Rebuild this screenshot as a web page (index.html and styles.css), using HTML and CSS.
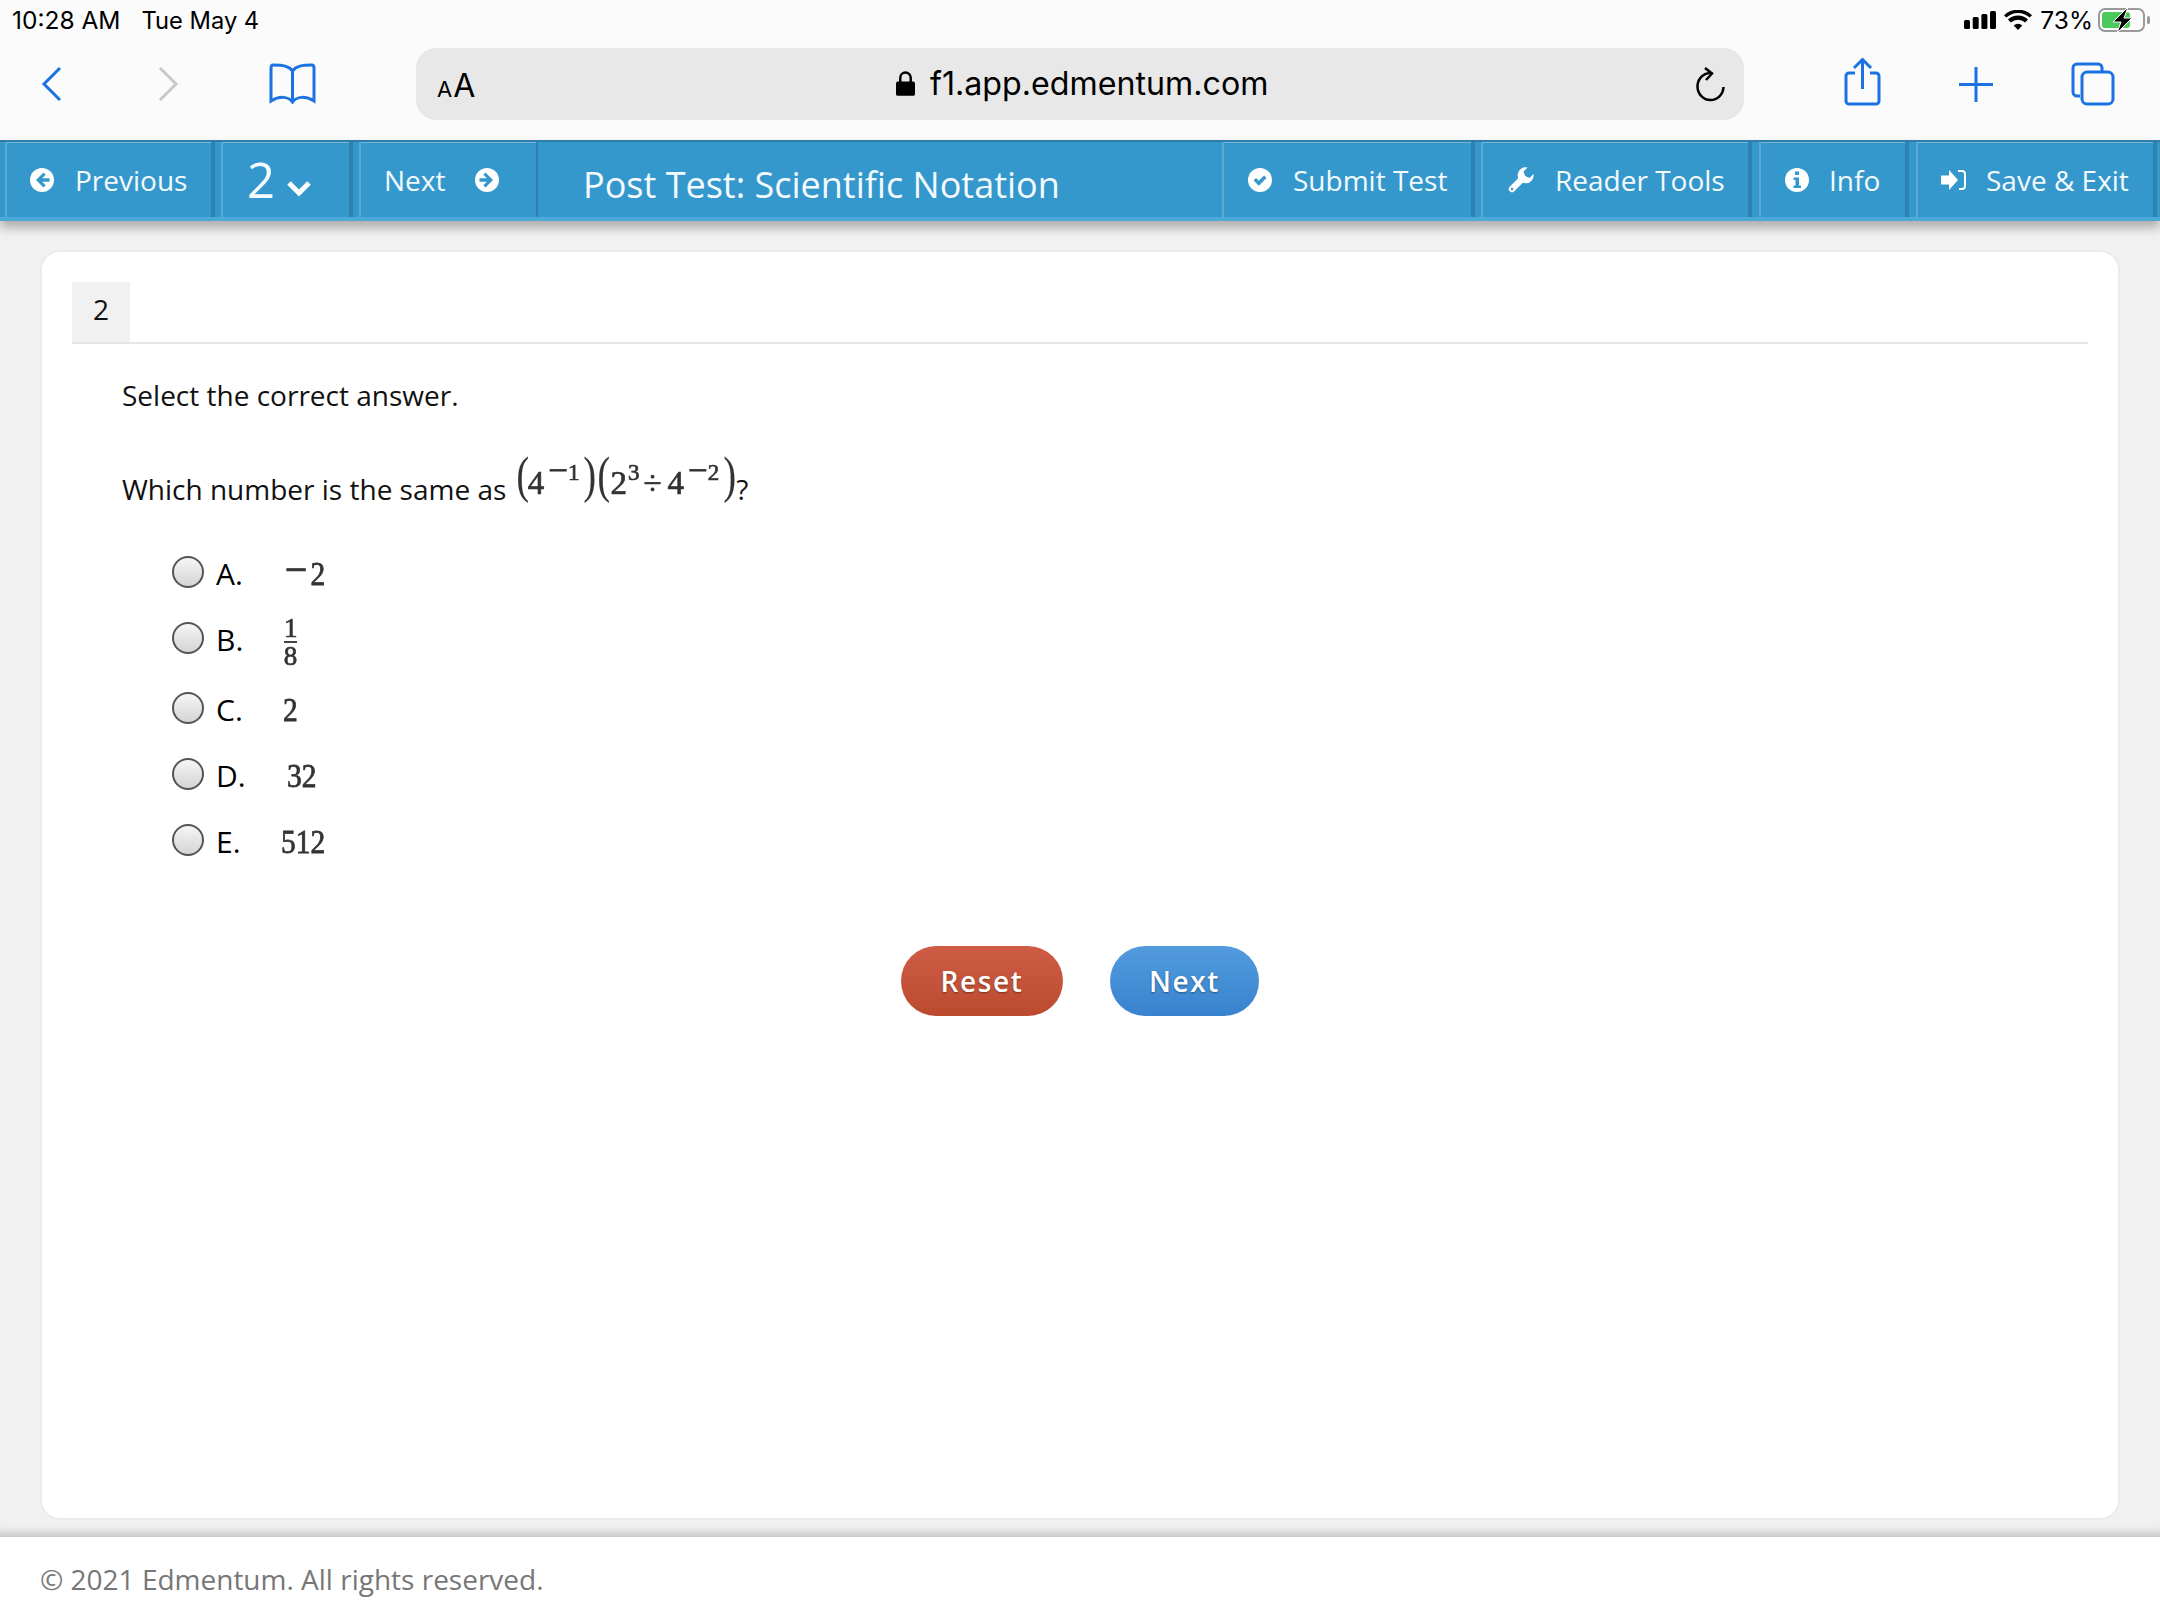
FILE: index.html
```html
<!DOCTYPE html>
<html lang="en">
<head>
<meta charset="utf-8">
<title>Post Test: Scientific Notation</title>
<link rel="stylesheet" href="styles.css">
</head>
<body>
<header class="ios">
  <div class="status">
    <span class="time">10:28 AM</span><span class="date">Tue May 4</span>
    <span class="status-right">
      <svg class="signal" viewBox="0 0 32 18"><rect x="0" y="9" width="6" height="9" rx="1.500"/><rect x="8.700" y="6" width="6" height="12" rx="1.500"/><rect x="17.400" y="3" width="6" height="15" rx="1.500"/><rect x="26" y="0" width="6" height="18" rx="1.500"/></svg>
      <svg class="wifi" viewBox="0 0 28 20"><path d="M14 20l-4.300-4.600a6.300 6.300 0 0 1 8.600 0zM6.900 12.500L4 9.400a14.600 14.600 0 0 1 20 0l-2.900 3.100a10.300 10.300 0 0 0-14.200 0zM2.300 7.600L0 5.200a20.400 20.400 0 0 1 28 0l-2.300 2.400a17 17 0 0 0-23.400 0z"/></svg>
      <span class="pct">73%</span>
      <svg class="battery" viewBox="0 0 52 26"><rect x="1" y="2" width="45" height="22" rx="6" fill="none" stroke="#9a9a9a" stroke-width="2"/><rect x="4" y="5" width="28" height="16" rx="3" fill="#4cc95c"/><rect x="49" y="9" width="3" height="8" rx="1.500" fill="#9a9a9a"/><path d="M30 0L15 15h8l-4 11 15-15h-8z" fill="#000" stroke="#fff" stroke-width="1"/></svg>
    </span>
  </div>
  <div class="toolbar">
    <svg class="tb back" viewBox="0 0 21 36"><path d="M19 2L3 18l16 16"/></svg>
    <svg class="tb fwd" viewBox="0 0 21 36"><path d="M2 2l16 16L2 34"/></svg>
    <svg class="tb book" viewBox="0 0 47 41"><path d="M23.500 8C20 3 14 2 4 2Q2 2 2 5v33c8-5 17-5 21.500 1C28 33 37 33 45 38V5q0-3-2-3C33 2 27 3 23.500 8zM23.500 8v31"/></svg>
    <div class="address">
      <span class="aa"><small>A</small>A</span>
      <span class="url"><svg class="lock" viewBox="0 0 20 26"><path d="M2 11h16a2 2 0 0 1 2 2v11a2 2 0 0 1-2 2H2a2 2 0 0 1-2-2V13a2 2 0 0 1 2-2z"/><path d="M4.500 12V7a5.500 5.500 0 0 1 11 0v5" fill="none" stroke="#000" stroke-width="2.600"/></svg>f1.app.edmentum.com</span>
      <svg class="reload" viewBox="0 0 30 36"><path d="M15 6A13 13.500 0 1 0 28.500 20"/><path d="M10 1l7 5.500-6 6.500"/></svg>
    </div>
    <svg class="tb share" viewBox="0 0 37 48"><path d="M11 15H5a3 3 0 0 0-3 3v25a3 3 0 0 0 3 3h27a3 3 0 0 0 3-3V18a3 3 0 0 0-3-3h-6M18.500 31V2M10 10l8.500-8.500L27 10"/></svg>
    <svg class="tb plus" viewBox="0 0 34 35"><path d="M17 0v35M0 17.500h34"/></svg>
    <svg class="tb tabs" viewBox="0 0 44 44"><path d="M9 34H6a4 4 0 0 1-4-4V6a4 4 0 0 1 4-4h21a4 4 0 0 1 4 4v4"/><rect x="11" y="10" width="31" height="32" rx="5"/></svg>
  </div>
</header>
<nav class="testbar">
  <a class="seg seg-prev"><svg class="ico" viewBox="0 0 24 24"><circle cx="12" cy="12" r="12" fill="#fff"/><path d="M13.500 4.500L6 12l7.500 7.500 2.200-2.200-3.600-3.600h7.400v-3.400h-7.400l3.600-3.600z" fill="#3498cc"/></svg>Previous</a>
  <a class="seg seg-num"><span class="num">2</span><svg class="chev" viewBox="0 0 26 20"><path d="M3 5l10 10L23 5"/></svg></a>
  <a class="seg seg-next">Next<svg class="ico" viewBox="0 0 24 24"><circle cx="12" cy="12" r="12" fill="#fff"/><path d="M10.500 4.500L18 12l-7.500 7.500-2.200-2.200 3.600-3.600H4.500v-3.400h7.400L8.300 6.700z" fill="#3498cc"/></svg></a>
  <h1 class="title">Post Test: Scientific Notation</h1>
  <a class="seg seg-submit"><svg class="ico" viewBox="0 0 24 24"><circle cx="12" cy="12" r="12" fill="#fff"/><path d="M5.500 12.500l2.500-2.500 2.800 2.800 5.200-5.200 2.500 2.500-7.700 7.700z" fill="#3498cc"/></svg>Submit Test</a>
  <a class="seg seg-reader"><svg class="ico ico-wrench" viewBox="0 0 26 26"><path d="M19.500.5a8 8 0 1 0 6 6.500l-4 4-4.500-2-1.500-4.500z" fill="#fff"/><path d="M4 22l11-11" stroke="#fff" stroke-width="6.500" stroke-linecap="round"/><circle cx="4" cy="22" r="1.300" fill="#3498cc"/></svg>Reader Tools</a>
  <a class="seg seg-info"><svg class="ico" viewBox="0 0 24 24"><circle cx="12" cy="12" r="12" fill="#fff"/><path d="M10 3.500h4v3.500h-4zM8.500 9.500H14v8h2V20H8.500v-2.500h2V12h-2z" fill="#3498cc"/></svg>Info</a>
  <a class="seg seg-save"><svg class="ico ico-wide" viewBox="0 0 25 20"><path d="M0 5.500h8V0l9 10-9 10v-5.500H0z" fill="#fff"/><path d="M17 1h4a3 3 0 0 1 3 3v12a3 3 0 0 1-3 3h-3" fill="none" stroke="#fff" stroke-width="2"/></svg>Save &amp; Exit</a>
</nav>
<main class="page">
  <section class="card">
    <div class="tabline"><span class="tab">2</span></div>
    <p class="intro">Select the correct answer.</p>
    <p class="question">Which number is the same as <span class="math expr"><span class="par">(</span><span class="d1">4</span><sup class="s s1"><span class="mn">−</span>1</sup><span class="par par-c">)</span><span class="par par-o2">(</span><span class="d2">2</span><sup class="s s3">3</sup><span class="div">÷</span><span class="d3">4</span><sup class="s s2"><span class="mn">−</span>2</sup><span class="par par-c2">)</span></span>?</p>
    <ul class="options">
      <li class="opt"><span class="radio"></span><span class="letter">A.</span><span class="math ans ans-a"><span class="mn-big">−</span>2</span></li>
      <li class="opt opt-b"><span class="radio"></span><span class="letter">B.</span><span class="math frac"><span class="fn">1</span><span class="fd">8</span></span></li>
      <li class="opt"><span class="radio"></span><span class="letter">C.</span><span class="math ans ans-c">2</span></li>
      <li class="opt"><span class="radio"></span><span class="letter">D.</span><span class="math ans ans-d">32</span></li>
      <li class="opt"><span class="radio"></span><span class="letter">E.</span><span class="math ans ans-e">512</span></li>
    </ul>
    <div class="actions">
      <button class="btn btn-reset">Reset</button>
      <button class="btn btn-next">Next</button>
    </div>
  </section>
</main>
<footer class="foot">© 2021 Edmentum. All rights reserved.</footer>
</body>
</html>
```
FILE: styles.css
```css
* { box-sizing: border-box; }
html, body { margin: 0; padding: 0; }
body { width: 2160px; height: 1620px; overflow: hidden; display: flex; flex-direction: column; background: #f1f1f1; font-family: "Open Sans", sans-serif; color: #111; }

.ios { height: 140px; background: #fbfbfb; flex: none; }
.status { height: 40px; display: flex; align-items: center; padding: 0 10px 0 12px; font-family: Inter, "Liberation Sans", sans-serif; font-size: 23.700px; color: #000; }
.time { font-size: 24.500px; }
.date { margin-left: 21px; }
.status-right { margin-left: auto; display: flex; align-items: center; }
.signal { width: 32px; height: 18px; margin-right: 8px; }
.wifi { width: 28px; height: 20px; margin-right: 8px; }
.pct { margin-right: 5px; font-size: 24.500px; }
.battery { width: 52px; height: 26px; }

.toolbar { height: 100px; display: flex; align-items: flex-start; padding-top: 8px; position: relative; }
.tb { fill: none; stroke: #1a73e0; stroke-width: 3; flex: none; }
.back { width: 21px; height: 36px; margin-left: 41px; margin-top: 18px; }
.fwd { width: 21px; height: 36px; margin-left: 96px; margin-top: 18px; stroke: #c8c8c8; }
.book { width: 47px; height: 41px; margin-left: 90px; margin-top: 15px; }
.address { width: 1328px; height: 72px; margin-left: 100px; background: #e8e8e8; border-radius: 20px; display: flex; align-items: center; position: relative; padding: 2px 19px 0 20px; }
.aa { font-family: Inter, "Liberation Sans", sans-serif; font-size: 32px; color: #000; margin-left: 1px; }
.aa small { font-size: 22px; margin-right: 1px; }
.url { position: absolute; left: 480px; top: 16px; display: flex; align-items: center; font-family: Inter, "Liberation Sans", sans-serif; font-size: 32.200px; color: #000; white-space: nowrap; }
.lock { width: 19px; height: 25px; margin-right: 15px; }
.reload { width: 30px; height: 36px; margin-left: auto; fill: none; stroke: #000; stroke-width: 2.500; }
.share { width: 37px; height: 48px; margin-left: 100px; margin-top: 10px; }
.plus { width: 34px; height: 35px; margin-left: 78px; margin-top: 19px; }
.tabs { width: 44px; height: 44px; margin-left: 78px; margin-top: 14px; }

.testbar { height: 81px; flex: none; display: flex; background: #3498cc; border-top: 2px solid #2f7ea9; border-bottom: 4px solid #4ba8d8; box-shadow: 0 7px 10px rgba(0,0,0,.28); position: relative; color: #fff; padding-left: 5px; }
.seg { display: flex; align-items: center; height: 100%; font-size: 28px; color: #f4fafd; border-left: 2px solid #5aaad6; border-right: 4px solid #2e82b0; white-space: nowrap; box-shadow: inset 0 1px 0 #76b6da; }
.ico { width: 24px; height: 24px; flex: none; }
.ico-wide { width: 25px; height: 20px; }
.ico-wrench { width: 26px; height: 26px; }
.seg-prev { width: 210px; padding-left: 23px; }
.seg-prev .ico { margin-right: 21px; }
.seg-num { width: 132px; margin-left: 6px; padding-left: 24px; }
.num { font-size: 49px; font-weight: 400; line-height: 1; }
.chev { width: 26px; height: 20px; margin: 16px 0 0 11px; fill: none; stroke: #fff; stroke-width: 5; }
.seg-next { width: 179px; margin-left: 6px; padding-left: 23px; border-right: 2px solid #2e82b0; }
.seg-next .ico { margin-left: 30px; }
.title { flex: none; width: 684px; margin: 0; padding: 9px 0 0 45px; display: flex; align-items: center; font-size: 36px; font-weight: 400; color: #f4fafd; white-space: nowrap; }
.seg-submit { width: 253px; padding-left: 24px; }
.seg-submit .ico { margin-right: 21px; }
.seg-reader { width: 271px; margin-left: 6px; padding-left: 25px; }
.seg-reader .ico { margin-right: 21px; }
.seg-info { width: 150px; margin-left: 7px; padding-left: 24px; }
.seg-info .ico { margin-right: 20px; }
.seg-save { width: 241px; margin-left: 7px; padding-left: 23px; }
.seg-save .ico { margin-right: 20px; }

.page { flex: 1; padding: 29px 40px 17px; min-height: 0; box-shadow: inset 0 -14px 12px -12px rgba(0,0,0,.28); }
.card { height: 100%; background: #fff; border: 2px solid #ebebeb; border-radius: 20px; padding: 30px 30px 0; }
.tabline { border-bottom: 2px solid #e6e6e6; height: 62px; display: flex; }
.tab { width: 58px; background: #f1f1f1; font-size: 28px; text-align: center; line-height: 54px; color: #111; }
.intro { margin: 31px 0 0 50px; font-size: 28px; line-height: 40px; color: #111; }
.question { margin: 49px 0 0 50px; font-size: 28px; line-height: 50px; color: #111; white-space: nowrap; }
.math { font-family: "Liberation Serif", serif; color: #333; -webkit-text-stroke: .7px #333; filter: blur(.35px); }

.expr { display: inline-block; font-size: 33px; line-height: 50px; position: relative; top: -6px; margin-left: 1px; margin-right: 3px; }
.par { display: inline-block; width: 11px; font-size: 50px; line-height: 0; text-align: center; font-weight: 400; -webkit-text-stroke: .2px #333; transform: translateY(-2px) scaleX(.75); }
.d1 { margin-left: 2px; }
.s { font-size: 23px; line-height: 0; vertical-align: 14px; }
.mn { font-size: 35px; line-height: 0; vertical-align: -2px; }
.s1 { margin-left: 4px; }
.par-c { margin-left: 3px; }
.par-o2 { margin-left: 3px; }
.d2 { margin-left: 3px; }
.s3 { margin-left: 1px; }
.div { margin-left: 4px; }
.d3 { margin-left: 6px; }
.s2 { margin-left: 4px; }
.par-c2 { margin-left: 3px; }

.options { list-style: none; margin: 25px 0 0; padding: 0 0 0 100px; display: flex; flex-direction: column; }
.opt { height: 66px; display: flex; align-items: center; font-size: 30px; }
.opt-b { height: 70px; padding-bottom: 4px; }
.radio { width: 32px; height: 32px; border-radius: 50%; border: 2px solid #555; background: linear-gradient(#f6f6f6, #d4d4d4); flex: none; }
.letter { margin-left: 12px; width: 65px; color: #000; padding-top: 3px; }
.ans { display: inline-block; font-size: 29.500px; transform: translateY(3px) scaleY(1.15); line-height: 1; }
.mn-big { font-size: 40px; line-height: 0; margin-right: 3px; }
.ans-a { margin-left: 4px; }
.ans-c { margin-left: 2px; }
.ans-d { margin-left: 6px; }
.ans-e { margin-left: 0; }
.frac { display: flex; flex-direction: column; align-items: center; width: 13px; margin-left: 3px; font-size: 27px; transform: translateY(4px); }
.fn { width: 100%; border-bottom: 2px solid #444; line-height: 25px; text-align: center; }
.fd { line-height: 26px; }

.actions { display: flex; justify-content: center; gap: 47px; margin-top: 73px; }
.btn { border: 0; border-radius: 35px; height: 70px; font-family: "Open Sans", sans-serif; font-size: 28px; font-weight: 600; letter-spacing: 1.600px; color: #fff; text-shadow: 0 1px 2px rgba(0,0,0,.4); padding: 0; }
.btn-reset { width: 162px; background: linear-gradient(#cf5d46, #bb4a2f); }
.btn-next { width: 149px; background: linear-gradient(#529bde, #3883ce); }

.foot { height: 83px; flex: none; background: #fff; padding: 22px 0 0 40px; font-size: 28px; line-height: 40px; color: #777; }
```
